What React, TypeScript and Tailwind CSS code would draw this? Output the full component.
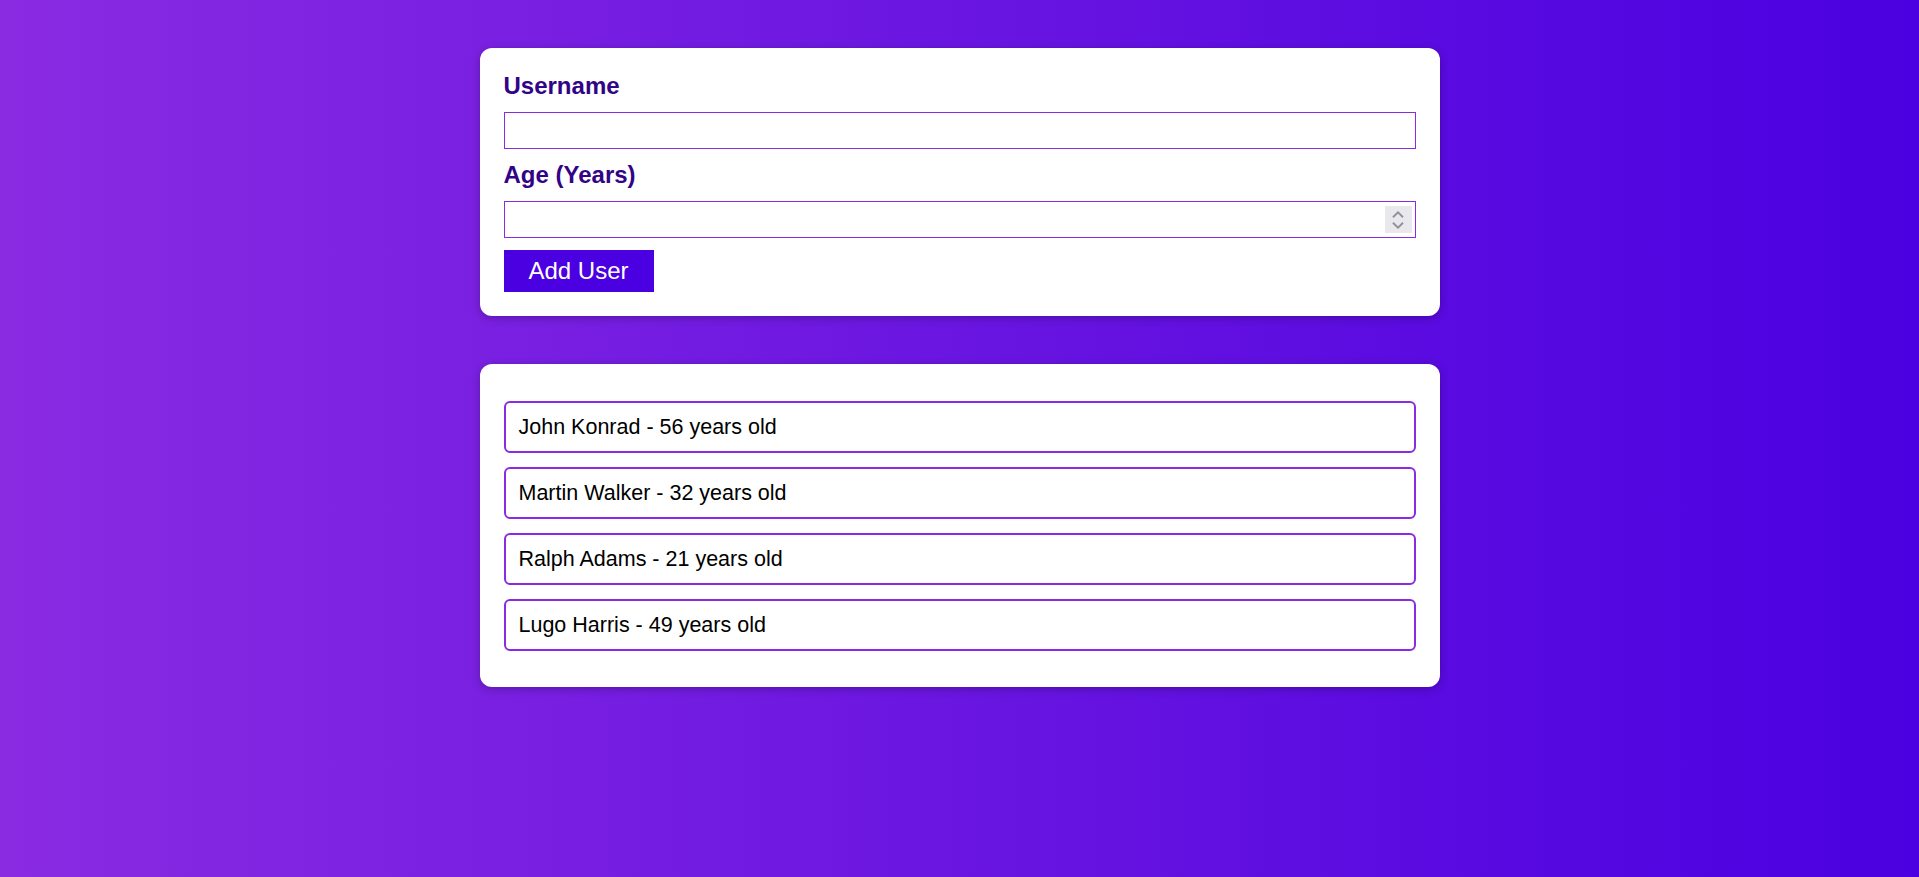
import { useState } from "react";

type User = {
  id: string
  name: string
  age: number
}

const initialUsers: User[] = [
  { id: "u1", name: "John Konrad", age: 56 },
  { id: "u2", name: "Martin Walker", age: 32 },
  { id: "u3", name: "Ralph Adams", age: 21 },
  { id: "u4", name: "Lugo Harris", age: 49 },
]

const Card = ({ children, className }: { children: React.ReactNode; className?: string }) => (
  <div className={`w-[960px] bg-white rounded-[12px] shadow-[0_2px_8px_rgba(0,0,0,0.26)] ${className ?? ""}`}>
    {children}
  </div>
)

// fake number spinner, the native one only shows on hover
const Spinner = () => (
  <div className="pointer-events-none absolute right-[4px] top-[5px] flex h-[27px] w-[27px] flex-col items-center justify-center gap-[4px] bg-[#e9e9ed]">
    <svg width="12" height="7" viewBox="0 0 12 7" fill="none">
      <path d="M1 6.2L6 1.4L11 6.2" stroke="#8f8f9d" strokeWidth="1.9" />
    </svg>
    <svg width="12" height="7" viewBox="0 0 12 7" fill="none">
      <path d="M1 0.8L6 5.6L11 0.8" stroke="#8f8f9d" strokeWidth="1.9" />
    </svg>
  </div>
)

const App = () => {
  const [users, setUsers] = useState<User[]>(initialUsers)
  const [username, setUsername] = useState("")
  const [age, setAge] = useState("")

  const handleSubmit = (e: React.FormEvent<HTMLFormElement>) => {
    e.preventDefault()
    if (!username.trim() || !age.trim() || +age < 1) return
    setUsers([...users, { id: Math.random().toString(), name: username, age: +age }])
    setUsername("")
    setAge("")
  }

  return (
    <div
      className="min-h-screen w-full bg-[linear-gradient(to_right,#8a2be2,#4a00e0)] pt-[48px] pb-[48px]"
      style={{ fontFamily: '"Liberation Sans", Arial, sans-serif' }}
    >
      <div className="flex flex-col items-center gap-[48px]">
        <Card className="p-[24px]">
          <form onSubmit={handleSubmit}>
            <label htmlFor="username" className="block text-[24px] leading-[28px] font-bold text-[#320387] mb-[12px]">
              Username
            </label>
            <input
              id="username"
              type="text"
              value={username}
              onChange={(e) => setUsername(e.target.value)}
              className="block w-full h-[37px] border border-[#8a2be2] px-[3px] text-[24px] outline-none mb-[12px]"
            />
            <label htmlFor="age" className="block text-[24px] leading-[28px] font-bold text-[#320387] mb-[12px]">
              Age (Years)
            </label>
            <div className="relative mb-[12px]">
              <input
                id="age"
                type="number"
                value={age}
                onChange={(e) => setAge(e.target.value)}
                className="block w-full h-[37px] border border-[#8a2be2] px-[3px] text-[24px] outline-none [appearance:textfield] [&::-webkit-inner-spin-button]:appearance-none [&::-webkit-outer-spin-button]:appearance-none"
              />
              <Spinner />
            </div>
            <button
              type="submit"
              className="h-[42px] w-[150px] bg-[#4a00e0] text-white text-[24px] leading-[28px] cursor-pointer"
            >
              Add User
            </button>
          </form>
        </Card>

        <Card className="px-[24px] pt-[37px] pb-[36px]">
          <ul className="flex flex-col gap-[14px]">
            {users.map((user) => (
              <li
                key={user.id}
                className="flex h-[52px] items-center rounded-[6px] border-2 border-[#8a2be2] px-[13px] text-[21.5px] text-black"
              >
                {user.name} - {user.age} years old
              </li>
            ))}
          </ul>
        </Card>
      </div>
    </div>
  );
}

export default App;
